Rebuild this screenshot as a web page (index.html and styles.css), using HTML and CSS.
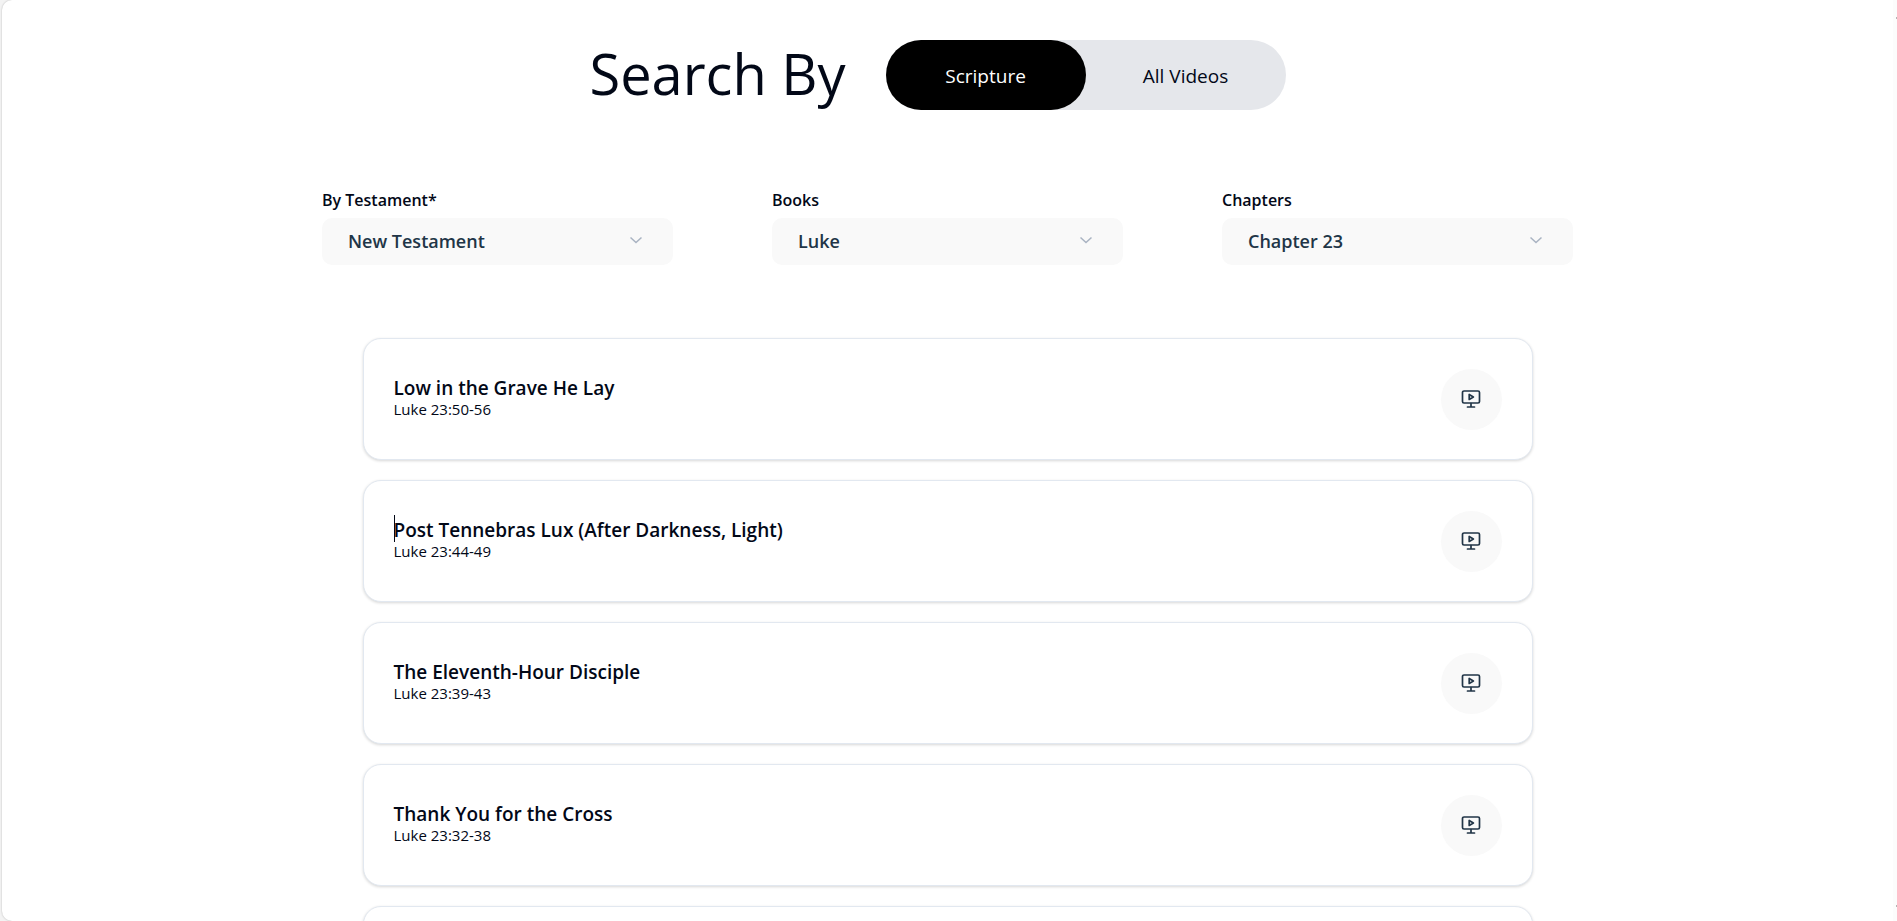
FILE: index.html
```html
<!DOCTYPE html>
<html lang="en">
<head>
  <meta charset="UTF-8">
  <meta name="viewport" content="width=device-width, initial-scale=1.0">
  <title>Search By Scripture</title>
  <link rel="stylesheet" href="styles.css">
</head>
<body>
  <svg class="sprite" aria-hidden="true">
    <symbol id="icon-video" viewBox="0 0 20 20">
      <rect x="1.5" y="2" width="17" height="12" rx="1.5" />
      <path d="M10 14.5v3M6.5 18h7M8.2 5.5v5l4.2-2.5z" />
    </symbol>
    <symbol id="icon-chevron" viewBox="0 0 14 14">
      <path d="M1.5 4.5l5.5 5 5.5-5" />
    </symbol>
  </svg>

  <main class="page">
    <header class="header">
      <h1>Search By</h1>
      <div class="toggle">
        <button type="button" class="toggle-btn active">Scripture</button>
        <button type="button" class="toggle-btn">All Videos</button>
      </div>
    </header>

    <form class="filters">
      <div class="filter">
        <label for="testament">By Testament*</label>
        <div class="select-wrap">
          <select id="testament">
            <option>Old Testament</option>
            <option selected>New Testament</option>
          </select>
          <svg class="chevron"><use href="#icon-chevron" /></svg>
        </div>
      </div>
      <div class="filter">
        <label for="book">Books</label>
        <div class="select-wrap">
          <select id="book">
            <option selected>Luke</option>
          </select>
          <svg class="chevron"><use href="#icon-chevron" /></svg>
        </div>
      </div>
      <div class="filter">
        <label for="chapter">Chapters</label>
        <div class="select-wrap">
          <select id="chapter">
            <option selected>Chapter 23</option>
          </select>
          <svg class="chevron"><use href="#icon-chevron" /></svg>
        </div>
      </div>
    </form>

    <section class="results">
      <article class="card">
        <div class="card-text">
          <h2>Low in the Grave He Lay</h2>
          <p>Luke 23:50-56</p>
        </div>
        <button type="button" class="play" aria-label="Play video"><svg><use href="#icon-video" /></svg></button>
      </article>
      <article class="card">
        <div class="card-text">
          <h2 class="caret">Post Tennebras Lux (After Darkness, Light)</h2>
          <p>Luke 23:44-49</p>
        </div>
        <button type="button" class="play" aria-label="Play video"><svg><use href="#icon-video" /></svg></button>
      </article>
      <article class="card">
        <div class="card-text">
          <h2>The Eleventh-Hour Disciple</h2>
          <p>Luke 23:39-43</p>
        </div>
        <button type="button" class="play" aria-label="Play video"><svg><use href="#icon-video" /></svg></button>
      </article>
      <article class="card">
        <div class="card-text">
          <h2>Thank You for the Cross</h2>
          <p>Luke 23:32-38</p>
        </div>
        <button type="button" class="play" aria-label="Play video"><svg><use href="#icon-video" /></svg></button>
      </article>
      <article class="card"></article>
    </section>
  </main>

  <div class="scroll-track"></div>
</body>
</html>
```
FILE: styles.css
```css
* {
  box-sizing: border-box;
}
body {
  margin: 0;
  height: 100vh;
  overflow: hidden;
  display: flex;
  padding-left: 2px;
  background: #f3f3f3;
  color: #020817;
  font-family: "Segoe UI", "Open Sans", "Noto Sans", sans-serif;
}
h1, h2, p {
  margin: 0;
}
.sprite {
  position: absolute;
  width: 0;
  height: 0;
}
.page {
  flex: 1;
  overflow: hidden;
  padding-top: 40px;
  background: #fff;
  border-radius: 10px 0 0 10px;
  box-shadow: 0 0 2px rgba(0, 0, 0, 0.25);
}

.header {
  display: flex;
  justify-content: center;
  align-items: center;
  gap: 40px;
  padding-right: 20px;
}
.header h1 {
  font-size: 56px;
  font-weight: 400;
  line-height: 66px;
  padding-bottom: 4px;
}
.toggle {
  display: flex;
  width: 400px;
  height: 70px;
  border-radius: 35px;
  background: #e5e7eb;
}
.toggle-btn {
  flex: 1;
  padding: 2px 0 0;
  border: 0;
  border-radius: 35px;
  background: transparent;
  color: #020817;
  font: inherit;
  font-size: 19px;
  cursor: pointer;
}
.toggle-btn.active {
  background: #000;
  color: #fff;
}

.filters {
  display: grid;
  grid-template-columns: repeat(3, 1fr);
  gap: 99px;
  width: 1251px;
  max-width: 94%;
  margin: 78px auto 0;
}
.filter label {
  display: block;
  font-size: 16px;
  font-weight: 600;
  line-height: 24px;
}
.select-wrap {
  position: relative;
  margin-top: 6px;
}
.filter select {
  appearance: none;
  width: 100%;
  height: 47px;
  padding: 0 48px 2px 26px;
  border: 0;
  border-radius: 10px;
  background: #f9f9f9;
  color: #213547;
  font: inherit;
  font-size: 18px;
  font-weight: 600;
}
.chevron {
  position: absolute;
  top: 15px;
  right: 30px;
  width: 14px;
  height: 14px;
  fill: none;
  stroke: #a9b3c2;
  stroke-width: 1.5;
  pointer-events: none;
}

.results {
  display: flex;
  flex-direction: column;
  gap: 20px;
  width: 1170px;
  max-width: 90%;
  margin: 73px auto 0;
}
.card {
  display: flex;
  justify-content: space-between;
  align-items: center;
  min-height: 122px;
  padding: 0 30px;
  border: 1px solid #e2e8f0;
  border-radius: 18px;
  background: #fff;
  box-shadow: 0 1px 3px rgba(0, 0, 0, 0.16);
}
.card-text {
  padding-bottom: 4px;
}
.card h2 {
  font-size: 19px;
  font-weight: 600;
  line-height: 24px;
}
.card p {
  font-size: 15px;
  line-height: 18px;
}
.caret {
  position: relative;
}
.caret::before {
  content: "";
  position: absolute;
  left: 0;
  top: -3px;
  width: 1px;
  height: 27px;
  background: #020817;
}
.play {
  display: flex;
  justify-content: center;
  align-items: center;
  width: 61px;
  height: 61px;
  padding: 0;
  border: 0;
  border-radius: 50%;
  background: #f9f9f9;
  cursor: pointer;
}
.play svg {
  width: 20px;
  height: 20px;
  fill: none;
  stroke: #213547;
  stroke-width: 1.7;
  stroke-linejoin: round;
  stroke-linecap: round;
}

.scroll-track {
  display: flex;
  flex-direction: column;
  justify-content: space-between;
  align-items: flex-end;
  width: 4px;
  padding: 17px 0 14px;
  background: #fcfcfc;
}
.scroll-track::before,
.scroll-track::after {
  content: "";
  width: 1px;
  height: 2px;
  background: #b5b5b5;
}
```
